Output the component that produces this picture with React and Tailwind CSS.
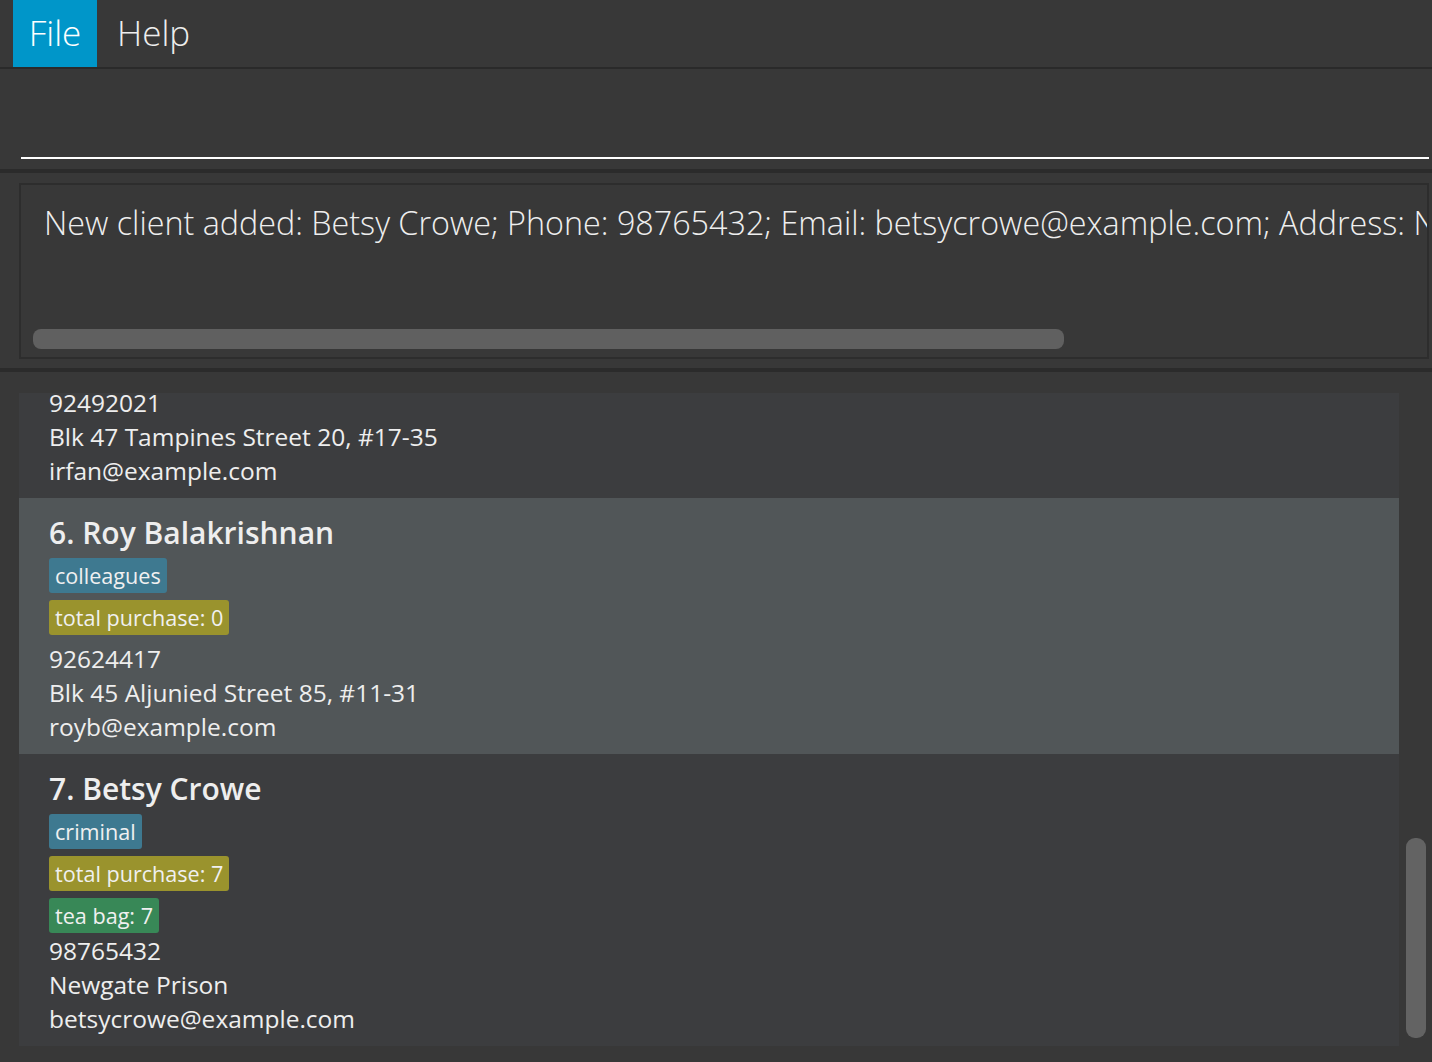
import React from "react";

const font = { fontFamily: '"Open Sans", "Noto Sans", sans-serif' };

const Tag = ({ label, color }) => (
  <div className="flex">
    <span className={`h-[35px] px-[6px] rounded-[3px] text-[21.6px] leading-[35px] text-[#f0f0f0] ${color}`}>{label}</span>
  </div>
);

const Line = ({ children }) => <div className="text-[24.5px] leading-[34px] text-[#eeeeee]">{children}</div>;

const PersonCard = ({ index, name, tags, phone, address, email, selected, tagGap }) => (
  <div className={`pl-[30px] pt-[15px] pb-[10px] ${selected ? "bg-[#515658]" : "bg-[#3c3d3f]"}`}>
    <div className="text-[30px] leading-[40px] font-semibold text-[#eeeeee]">{index}. {name}</div>
    <div className="flex flex-col gap-[7px] mt-[5px]">
      {tags.map((t) => (
        <Tag key={t.label} label={t.label} color={t.color} />
      ))}
    </div>
    <div style={{ marginTop: tagGap }}>
      <Line>{phone}</Line>
      <Line>{address}</Line>
      <Line>{email}</Line>
    </div>
  </div>
);

export default function App() {
  return (
    <div className="w-[1432px] h-[1062px] bg-[#383838] flex flex-col overflow-hidden" style={font}>
      {/* menu bar */}
      <div className="h-[67px] flex items-stretch pl-[13px] font-light text-[35px] text-[#eeeeee]">
        <div className="w-[84px] bg-[#0096c9] flex items-center justify-center text-white">File</div>
        <div className="px-[20px] flex items-center">Help</div>
      </div>
      <div className="h-[2px] bg-[#2a2a2a]" />

      {/* command box */}
      <div className="h-[100px] flex flex-col justify-end pl-[21px] pr-[3px] pb-[10px]">
        <div className="h-[2px] bg-white" />
      </div>
      <div className="h-[4px] bg-[#2b2b2b]" />

      {/* result display */}
      <div className="h-[195px] pt-[10px] pl-[19px] pr-[3px]">
        <div className="h-[176px] border-2 border-[#2d2d2d] overflow-hidden flex flex-col">
          <div className="pl-[23px] pt-[14px] text-[32.3px] leading-[46px] font-light text-[#eeeeee] whitespace-nowrap">
            New client added: Betsy Crowe; Phone: 98765432; Email: betsycrowe@example.com; Address: Newgate Prison; Tags: [criminal]
          </div>
          <div className="mt-auto mb-[8px] ml-[12px] w-[1031px] h-[20px] rounded-[8px] bg-[#606060]" />
        </div>
      </div>
      <div className="h-[4px] bg-[#2b2b2b]" />

      {/* person list */}
      <div className="flex-1 flex pl-[19px] pt-[21px] overflow-hidden">
        <div className="w-[1380px] flex flex-col">
          <div className="h-[105px] overflow-hidden flex flex-col justify-end bg-[#3c3d3f] pl-[30px] pb-[10px]">
            <Line>92492021</Line>
            <Line>Blk 47 Tampines Street 20, #17-35</Line>
            <Line>irfan@example.com</Line>
          </div>
          <PersonCard
            index={6}
            name="Roy Balakrishnan"
            selected
            tagGap="7px"
            tags={[
              { label: "colleagues", color: "bg-[#3e7990]" },
              { label: "total purchase: 0", color: "bg-[#9a932d]" },
            ]}
            phone="92624417"
            address="Blk 45 Aljunied Street 85, #11-31"
            email="royb@example.com"
          />
          <PersonCard
            index={7}
            name="Betsy Crowe"
            tagGap="1px"
            tags={[
              { label: "criminal", color: "bg-[#3e7990]" },
              { label: "total purchase: 7", color: "bg-[#9a932d]" },
              { label: "tea bag: 7", color: "bg-[#388857]" },
            ]}
            phone="98765432"
            address="Newgate Prison"
            email="betsycrowe@example.com"
          />
        </div>
        <div className="flex-1 flex flex-col items-center">
          <div className="mt-[445px] w-[20px] h-[200px] rounded-[9px] bg-[#636363]" />
        </div>
      </div>
    </div>
  );
}
